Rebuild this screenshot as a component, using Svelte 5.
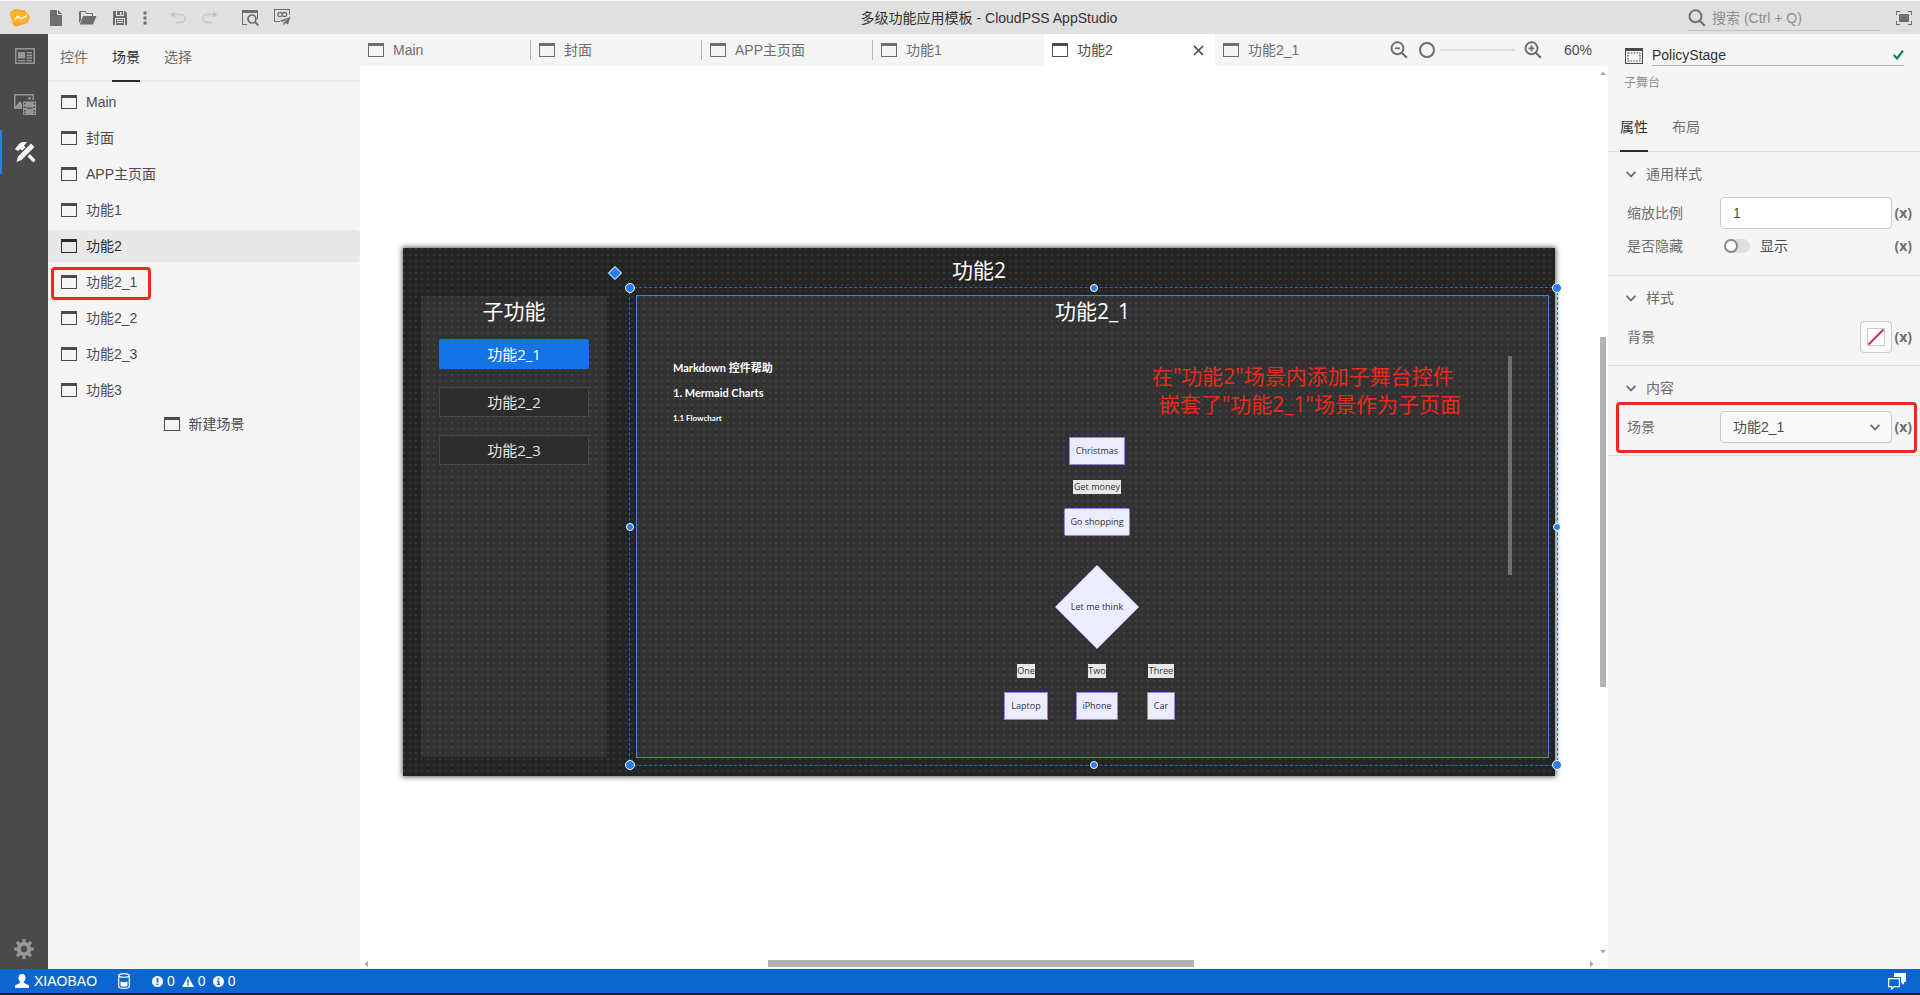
<script>
  const scenes = ['Main', '封面', 'APP主页面', '功能1', '功能2', '功能2_1', '功能2_2', '功能2_3', '功能3'];
  const tabs = ['Main', '封面', 'APP主页面', '功能1', '功能2', '功能2_1'];
  const current = '功能2';
  const marked = '功能2_1';
  const subScenes = ['功能2_1', '功能2_2', '功能2_3'];

  let zoom = $state(0);
  let ratio = $state('1');
  let hidden = $state(false);
  let scene = $state('功能2_1');
  let stageName = $state('PolicyStage');

  const handles = [
    { x: 0, y: 0, corner: true },
    { x: 50, y: 0 },
    { x: 100, y: 0, corner: true },
    { x: 0, y: 50 },
    { x: 100, y: 50 },
    { x: 0, y: 100, corner: true },
    { x: 50, y: 100 },
    { x: 100, y: 100, corner: true }
  ];

  const nodes = [
    { text: 'Christmas', x: 460, y: 155, w: 56, h: 28, kind: 'box' },
    { text: 'Get money', x: 460, y: 191, w: 48, h: 14, kind: 'edge' },
    { text: 'Go shopping', x: 460, y: 226, w: 66, h: 28, kind: 'box round' },
    { text: 'One', x: 389, y: 375, w: 18, h: 14, kind: 'edge' },
    { text: 'Two', x: 460, y: 375, w: 18, h: 14, kind: 'edge' },
    { text: 'Three', x: 524, y: 375, w: 26, h: 14, kind: 'edge' },
    { text: 'Laptop', x: 389, y: 410, w: 44, h: 28, kind: 'box' },
    { text: 'iPhone', x: 460, y: 410, w: 42, h: 28, kind: 'box' },
    { text: 'Car', x: 524, y: 410, w: 28, h: 28, kind: 'box' }
  ];
</script>

{#snippet windowIcon()}
  <svg class="ico" width="16" height="14" viewBox="0 0 16 14" aria-hidden="true">
    <path fill="currentColor" fill-rule="evenodd" d="M0 0h16v14H0zM1 3v10h14V3z" />
  </svg>
{/snippet}

{#snippet chevron()}
  <svg class="ico" width="10" height="7" viewBox="0 0 10 7" aria-hidden="true">
    <path fill="none" stroke="currentColor" stroke-width="1.7" d="M.6.8 5 5.4 9.4.8" />
  </svg>
{/snippet}

{#snippet magnifier(sign)}
  <svg class="ico" width="18" height="18" viewBox="0 0 18 18" aria-hidden="true">
    <circle cx="7.5" cy="7.3" r="6" fill="none" stroke="currentColor" stroke-width="1.9" />
    <path fill="none" stroke="currentColor" stroke-width="2.2" d="m11.8 11.8 5 5" />
    {#if sign}<path fill="none" stroke="currentColor" stroke-width="1.8" d={sign} />{/if}
  </svg>
{/snippet}

<div class="app">
  <header>
    <div class="tools">
      <svg class="logo" width="20" height="18" viewBox="0 0 20 18" aria-hidden="true">
        <path fill="#ff9d1f" d="M4.500 0 15 1.500l1.500 2.500L20 7l-2.500 7L6 17.500 3 16 0 4.500z" />
        <path fill="#ffb42c" d="M0 3 4.500 1l12 2.500 2.500 4-3 6.500-13 .5L2 10z" />
        <path fill="none" stroke="#fff" stroke-width="1.400" d="m4.500 10.500 3.500-3 3.500 2.500 5-3.500" />
      </svg>
      <button aria-label="New">
        <svg width="16" height="16" viewBox="0 0 16 16"><path fill="currentColor" d="M2 0h7v5h5v11H2zM10 0l4 4h-4z" /></svg>
      </button>
      <button aria-label="Open">
        <svg width="18" height="14" viewBox="0 0 18 14"><path fill="currentColor" d="M1 0h5.500L8 2h6v3h-1V3H7.500L6 1H2v8L0 12.500V1zM4 5h13.500L14 13.500H.8z" /></svg>
      </button>
      <button aria-label="Save">
        <svg width="14" height="14" viewBox="0 0 14 14"><path fill="currentColor" fill-rule="evenodd" d="M0 0h3v5h8V0h1l2 2v12h-2V7H2v7H0zM6 0h4v4H8.500V1H7v3H4V0zM3 8h8v6H3zm1 1v1h6V9zm0 2v1h6v-1z" /></svg>
      </button>
      <button class="narrow" aria-label="More">
        <svg width="4" height="14" viewBox="0 0 4 14"><path fill="currentColor" d="M.5.5h3v3h-3zM.5 5.500h3v3h-3zM.5 10.500h3v3h-3z" /></svg>
      </button>
      <button class="off" aria-label="Undo" disabled>
        <svg width="16" height="13" viewBox="0 0 16 13"><path fill="none" stroke="currentColor" stroke-width="1.600" d="M4 3.500h7a4 4 0 0 1 0 8H6" /><path fill="currentColor" d="M0 3.500 5 0v7z" /></svg>
      </button>
      <button class="off" aria-label="Redo" disabled>
        <svg width="16" height="13" viewBox="0 0 16 13"><path fill="none" stroke="currentColor" stroke-width="1.600" d="M12 3.500H5a4 4 0 0 0 0 8h5" /><path fill="currentColor" d="m16 3.500-5-3.500v7z" /></svg>
      </button>
      <button class="spaced" aria-label="Preview">
        <svg width="17" height="16" viewBox="0 0 17 16"><path fill="currentColor" d="M0 0h16v9h-1V3H1v11h4v1H0z" /><circle cx="10" cy="9" r="4" fill="none" stroke="currentColor" stroke-width="1.700" /><path stroke="currentColor" stroke-width="2" d="m12.800 11.800 3.500 3.500" /></svg>
      </button>
      <button aria-label="Publish">
        <svg width="17" height="17" viewBox="0 0 17 17"><path fill="currentColor" d="M0 0h16v6h-1V1H1v11h5v1H0zM16.500 8 14 15.500l-2.500-1.500-2 2.500V13.500L14.500 9.500 8 13 6 11.500z" /><circle cx="6" cy="5.500" r="2.200" fill="none" stroke="currentColor" stroke-width="1.200" /><circle cx="10.500" cy="5.500" r="2.200" fill="none" stroke="currentColor" stroke-width="1.200" /></svg>
      </button>
    </div>
    <div class="title">多级功能应用模板 - CloudPSS AppStudio</div>
    <div class="right-tools">
      <label class="search">
        {@render magnifier('')}
        <input type="search" placeholder="搜索 (Ctrl + Q)" aria-label="搜索" />
      </label>
      <button aria-label="Full screen">
        <svg width="16" height="14" viewBox="0 0 16 14"><path fill="currentColor" d="M3 3h10v8H3zM0 0h4v1H1v3H0zM12 0h4v4h-1V1h-3zM0 10h1v3h3v1H0zM15 10h1v4h-4v-1h3z" /></svg>
      </button>
    </div>
  </header>

  <main>
    <nav class="rail">
      <button aria-label="Pages">
        <svg width="20" height="16" viewBox="0 0 20 16"><path fill="currentColor" fill-rule="evenodd" d="M0 0h20v16H0zM1.500 1.500v13h17v-13zM3 4h7v6.500H3zM11.500 4H17v1.500h-5.500zM11.500 6.700H17v1.500h-5.500zM11.500 9.300H17v1.500h-5.500zM3 12h7v1.200H3zM11.500 12H17v1.200h-5.500z" /></svg>
      </button>
      <button aria-label="Assets">
        <svg width="22" height="24" viewBox="0 -2 22 24"><path fill="currentColor" fill-rule="evenodd" d="M0 0h20v6h-1.500V1.500h-17v11L6 7l2 2.500V15H0z" /><circle cx="15.500" cy="4.200" r="1.500" fill="currentColor" /><path fill="currentColor" fill-rule="evenodd" d="M9 7.500h13V21H9zM10 9v1.500h1.500V9zm0 3.500V14h1.500v-1.500zm0 3.500v1.500h1.500V16zM19.500 9v1.500H21V9zm0 3.500V14H21v-1.500zm0 3.500v1.500H21V16zM12.500 13.500v1.200h6v-1.200zM10 19v1h1.500v-1zm9.500 0v1H21v-1z" /></svg>
      </button>
      <button class="on" aria-label="Design">
        <svg width="21" height="22" viewBox="0 -1 21 22"><path fill="currentColor" d="M1 8 0 7l4-5c2-2 5-2.500 8-1.500L9 3.500l1.500 2-3.500 3L5 7 3.500 9zM16 1.500l3.500 3.500L6.500 18l-5 2 1.500-5.500zM12.500 14.500l2.500-2.500 5.500 6-2 2.500z" /></svg>
      </button>
      <span class="grow"></span>
      <button class="gear" aria-label="Settings">
        <svg width="20" height="20" viewBox="-10 -10 20 20">
          <circle r="5.200" fill="none" stroke="currentColor" stroke-width="4" />
          {#each [0, 45, 90, 135] as a}
            <path fill="currentColor" transform="rotate({a})" d="M-1.600-10h3.200v3.500h-3.200zM-1.600 6.500h3.200V10h-3.200z" />
          {/each}
        </svg>
      </button>
    </nav>

    <aside class="scenes">
      <div class="subtabs">
        <button>控件</button>
        <button class="on">场景</button>
        <button>选择</button>
      </div>
      <ul>
        {#each scenes as name}
          <li>
            <button class:on={name === current} class:marked={name === marked}>
              {@render windowIcon()}<span>{name}</span>
            </button>
          </li>
        {/each}
      </ul>
      <button class="new">{@render windowIcon()}<span>新建场景</span></button>
    </aside>

    <section class="editor">
      <div class="tabbar">
        <div class="tabs">
          {#each tabs as name}
            <div class="tab" class:on={name === current}>
              <button class="name">{@render windowIcon()}<span>{name}</span></button>
              {#if name === current}
                <button class="close" aria-label="Close">
                  <svg width="11" height="11" viewBox="0 0 11 11"><path stroke="currentColor" stroke-width="1.700" d="m1 1 9 9M10 1l-9 9" /></svg>
                </button>
              {/if}
            </div>
          {/each}
        </div>
        <div class="zoom">
          <button aria-label="Zoom out">{@render magnifier('M5 7.300h5')}</button>
          <input type="range" min="0" max="100" bind:value={zoom} aria-label="Zoom" />
          <button aria-label="Zoom in">{@render magnifier('M4.500 7.300h6M7.500 4.300v6')}</button>
          <span>60%</span>
        </div>
      </div>

      <div class="viewport">
        <div class="canvas">
          <div class="stage">
            <h1>功能2</h1>
            <div class="menu">
              <h2>子功能</h2>
              {#each subScenes as name, i}
                <button class:on={i === 0}>{name}</button>
              {/each}
            </div>
            <div class="sub">
              <h2>功能2_1</h2>
              <div class="markdown">
                <h3>Markdown 控件帮助</h3>
                <h3>1. Mermaid Charts</h3>
                <h4>1.1 Flowchart</h4>
              </div>
              <p class="note">在"功能2"场景内添加子舞台控件<br /><span>嵌套了"功能2_1"场景作为子页面</span></p>
              <span class="thumb"></span>
              {#each nodes as n}
                <div class="node {n.kind}" style="left:{n.x}px;top:{n.y}px;width:{n.w}px;height:{n.h}px">{n.text}</div>
              {/each}
              <svg class="rhombus" width="86" height="86" viewBox="0 0 86 86" aria-hidden="true">
                <path fill="#ececff" stroke="#9370db" stroke-width="1" d="M43 1 85 43 43 85 1 43z" />
              </svg>
              <div class="node think">Let me think</div>
            </div>
            <div class="dots"></div>
            <div class="selection">
              <span class="pivot"></span>
              {#each handles as h}
                <span class="handle" class:corner={h.corner} style="left:{h.x}%;top:{h.y}%"></span>
              {/each}
            </div>
          </div>
        </div>
        <div class="vbar">
          <svg width="6" height="4" viewBox="0 0 6 4" aria-hidden="true"><path fill="#a8a8a8" d="M0 4h6L3 .5z" /></svg>
          <span class="track"><span class="vthumb"></span></span>
          <svg width="6" height="4" viewBox="0 0 6 4" aria-hidden="true"><path fill="#a8a8a8" d="M0 0h6L3 3.500z" /></svg>
        </div>
        <div class="hbar">
          <svg width="4" height="6" viewBox="0 0 4 6" aria-hidden="true"><path fill="#a8a8a8" d="M4 0v6L.5 3z" /></svg>
          <span class="track"><span class="hthumb"></span></span>
          <svg width="4" height="6" viewBox="0 0 4 6" aria-hidden="true"><path fill="#a8a8a8" d="M0 0v6l3.500-3z" /></svg>
        </div>
      </div>
    </section>

    <aside class="props">
      <div class="head">
        <svg class="ico" width="18" height="16" viewBox="0 0 18 16" aria-hidden="true">
          <path fill="#4a4a4a" fill-rule="evenodd" d="M0 0h18v16H0zM1 3v12h16V3z" />
          <rect x="3" y="5" width="12" height="8" fill="none" stroke="#4a4a4a" stroke-width="1.200" stroke-dasharray="1.500 1.300" />
        </svg>
        <label class="field">
          <input bind:value={stageName} aria-label="Name" />
          <svg width="11" height="10" viewBox="0 0 11 10" aria-hidden="true"><path fill="none" stroke="#12805c" stroke-width="2.200" d="M.8 5 4 8.500 10 .8" /></svg>
        </label>
      </div>
      <div class="kind">子舞台</div>
      <div class="subtabs">
        <button class="on">属性</button>
        <button>布局</button>
      </div>

      <section>
        <h5>{@render chevron()}通用样式</h5>
        <div class="row">
          <label for="ratio">缩放比例</label>
          <input id="ratio" class="box-input" bind:value={ratio} />
          <button class="fx">(x)</button>
        </div>
        <div class="row low">
          <label for="hide">是否隐藏</label>
          <div class="switch">
            <input id="hide" type="checkbox" bind:checked={hidden} />
            <span>显示</span>
          </div>
          <button class="fx">(x)</button>
        </div>
      </section>

      <section>
        <h5>{@render chevron()}样式</h5>
        <div class="row">
          <span class="label">背景</span>
          <div class="end">
            <button class="swatch" aria-label="背景">
              <svg width="18" height="18" viewBox="0 0 18 18"><rect x=".5" y=".5" width="17" height="17" fill="#fff" stroke="#cacaca" /><path stroke="#c2343f" stroke-width="2" d="M1.500 16.500 16.500 1.500" /></svg>
            </button>
          </div>
          <button class="fx">(x)</button>
        </div>
      </section>

      <section>
        <h5>{@render chevron()}内容</h5>
        <div class="row marked-row">
          <label for="scene">场景</label>
          <div class="select">
            <select id="scene" bind:value={scene}>
              {#each scenes as name}<option value={name}>{name}</option>{/each}
            </select>
            {@render chevron()}
          </div>
          <button class="fx">(x)</button>
        </div>
      </section>
    </aside>
  </main>

  <footer>
    <svg width="14" height="14" viewBox="0 0 14 14" aria-hidden="true"><path fill="currentColor" d="M7 0c2.200 0 3.500 1.500 3.500 3.800 0 1.700-.7 3.200-1.700 4v1L14 11.500V14H0v-2.500l5.200-2.700v-1c-1-.8-1.700-2.300-1.700-4C3.500 1.500 4.800 0 7 0z" /></svg>
    <span class="user">XIAOBAO</span>
    <svg class="db" width="12" height="16" viewBox="0 0 12 16" aria-hidden="true"><path fill="none" stroke="currentColor" stroke-width="1.200" d="M.7 2.500v11C.7 16 11.300 16 11.300 13.500v-11C11.300 0 .7 0 .7 2.500zc0 2.300 10.600 2.300 10.600 0" /><path fill="currentColor" d="M2.500 8.500c2 1 5 1 7 0V13c-2 1-5 1-7 0z" /></svg>
    <span class="stat">
      <svg width="11" height="11" viewBox="0 0 11 11" aria-hidden="true"><circle cx="5.500" cy="5.500" r="5.500" fill="currentColor" /><path fill="#0d66d0" d="M4.600 2h1.800v4.500H4.600zM4.600 7.500h1.800v1.700H4.600z" /></svg>0
    </span>
    <span class="stat">
      <svg width="12" height="11" viewBox="0 0 12 11" aria-hidden="true"><path fill="currentColor" d="M6 0l6 11H0z" /><path fill="#0d66d0" d="M5.200 3.500h1.600V7.500H5.200zM5.200 8.300h1.600v1.500H5.200z" /></svg>0
    </span>
    <span class="stat">
      <svg width="11" height="11" viewBox="0 0 11 11" aria-hidden="true"><circle cx="5.500" cy="5.500" r="5.500" fill="currentColor" /><path fill="#0d66d0" d="M4.600 1.800h1.800v1.600H4.600zM4 4.500h2.400V8H7v1H4V8h.7V5.500H4z" /></svg>0
    </span>
    <span class="grow"></span>
    <svg width="18" height="17" viewBox="0 0 18 17" aria-hidden="true"><path fill="currentColor" d="M6 0h12v9h-1.500l-1.500 3-2-3V4H6z" /><path fill="none" stroke="currentColor" stroke-width="1.200" d="M.6 5.600h10.800v8H6L3.500 16v-2.400H.6z" /></svg>
  </footer>
</div>

<style>
  :global(body) {
    margin: 0;
  }
  .app {
    display: flex;
    flex-direction: column;
    min-height: 100vh;
    box-sizing: border-box;
    border-bottom: 2px solid #16202f;
    background: #f5f5f5;
    color: #4b4b4b;
    font: 14px/20px 'Liberation Sans', 'Noto Sans CJK SC', sans-serif;
  }
  button {
    display: flex;
    align-items: center;
    margin: 0;
    padding: 0;
    border: 0;
    background: none;
    color: inherit;
    font: inherit;
  }
  input,
  select {
    margin: 0;
    padding: 0;
    border: 0;
    background: none;
    color: inherit;
    font: inherit;
    outline: none;
    box-sizing: border-box;
    min-width: 0;
  }
  svg {
    display: block;
    flex: none;
  }
  .grow {
    flex: 1;
  }

  header {
    display: flex;
    align-items: center;
    height: 33px;
    border-top: 1px solid #f5f5f5;
    background: #e0e0e0;
    color: #6e6e6e;
  }
  .tools {
    display: flex;
    align-items: center;
    box-sizing: border-box;
    width: 298px;
    padding-left: 10px;
  }
  .logo {
    margin-right: 10px;
  }
  .tools button {
    justify-content: center;
    width: 32px;
    height: 32px;
  }
  .tools .narrow {
    width: 18px;
  }
  .tools .off {
    color: #c6c6c6;
  }
  .tools .narrow + .off {
    margin-left: 9px;
  }
  .tools .spaced {
    margin-left: 8px;
  }
  .title {
    flex: 1;
    text-align: center;
    color: #323232;
  }
  .right-tools {
    display: flex;
    align-items: center;
    gap: 16px;
    padding: 0 8px;
  }
  .search {
    display: flex;
    align-items: center;
    gap: 6px;
    width: 192px;
    height: 24px;
    margin-top: 2px;
    border-bottom: 1px solid #c4c4c4;
  }
  .search input {
    flex: 1;
    -webkit-appearance: none;
    appearance: none;
  }
  .search input::placeholder {
    color: #8e8e8e;
  }

  main {
    flex: 1;
    display: flex;
    min-height: 0;
  }
  .rail {
    display: flex;
    flex-direction: column;
    gap: 4px;
    width: 48px;
    background: #4a4a4a;
    color: #969696;
  }
  .rail button {
    justify-content: center;
    height: 44px;
    border-left: 2px solid transparent;
  }
  .rail .on {
    border-left-color: #2680eb;
    color: #f5f5f5;
  }
  .rail button.gear {
    height: 40px;
    border-left: 0;
  }

  .scenes {
    width: 312px;
  }
  .subtabs {
    display: flex;
    gap: 24px;
    height: 46px;
    padding: 0 12px;
    border-bottom: 2px solid #eaeaea;
    color: #6e6e6e;
  }
  .subtabs button {
    height: 48px;
    box-sizing: border-box;
    border-bottom: 2px solid transparent;
  }
  .subtabs .on {
    border-color: #2c2c2c;
    color: #2c2c2c;
  }
  ul {
    display: flex;
    flex-direction: column;
    gap: 4px;
    margin: 4px 0 0;
    padding: 0;
    list-style: none;
  }
  li button {
    position: relative;
    gap: 9px;
    width: 100%;
    height: 32px;
    padding-left: 13px;
    border-radius: 0 4px 4px 0;
  }
  li .on {
    background: #e8e8e8;
    color: #2c2c2c;
  }
  .marked::after {
    content: '';
    position: absolute;
    left: 3px;
    top: 1px;
    width: 94px;
    height: 27px;
    border: 3px solid #f0281e;
    border-radius: 4px;
  }
  .new {
    gap: 9px;
    height: 32px;
    margin: 2px auto 0;
  }

  .editor {
    flex: 1;
    display: flex;
    flex-direction: column;
    min-width: 0;
  }
  .tabbar {
    display: flex;
    height: 32px;
    color: #6e6e6e;
  }
  .tabs {
    display: flex;
    flex: 1;
  }
  .tab {
    position: relative;
    display: flex;
    align-items: center;
    box-sizing: border-box;
    width: 171px;
    padding: 0 11px 0 8px;
  }
  .tab:nth-child(-n + 3)::after {
    content: '';
    position: absolute;
    right: 0;
    top: 6px;
    bottom: 6px;
    width: 1px;
    background: #b8b8b8;
  }
  .tab.on {
    background: #fff;
    color: #4b4b4b;
  }
  .tab .name {
    flex: 1;
    gap: 9px;
    height: 32px;
  }
  .close {
    height: 32px;
  }
  .zoom {
    display: flex;
    align-items: center;
    padding-right: 16px;
  }
  .zoom input {
    width: 99px;
    height: 18px;
    margin: 0 6px 0 11px;
    -webkit-appearance: none;
    appearance: none;
    background: linear-gradient(#dcdcdc, #dcdcdc) 21px 8px / 75px 2px no-repeat;
  }
  .zoom input::-webkit-slider-thumb {
    -webkit-appearance: none;
    width: 16px;
    height: 16px;
    box-sizing: border-box;
    border: 2px solid #6e6e6e;
    border-radius: 50%;
    background: #f5f5f5;
  }
  .zoom span {
    margin-left: 22px;
    color: #4b4b4b;
  }

  .viewport {
    flex: 1;
    display: grid;
    grid-template: 1fr 11px / 1fr 10px;
    background: #fff;
  }
  .canvas {
    display: flex;
    align-items: center;
    justify-content: center;
  }
  .vbar {
    display: flex;
    flex-direction: column;
    align-items: center;
    padding: 5px 0 4px;
  }
  .vbar .track {
    flex: 1;
    display: flex;
    flex-direction: column;
    width: 6px;
  }
  .vthumb {
    height: 40%;
    margin-top: 262px;
    background: #b2b2b2;
  }
  .hbar {
    display: flex;
    align-items: center;
    padding: 0 4px;
  }
  .hbar .track {
    flex: 1;
    display: flex;
  }
  .hthumb {
    width: 426px;
    height: 7px;
    margin-left: 400px;
    background: #b2b2b2;
  }

  .stage {
    position: relative;
    width: 1152px;
    height: 528px;
    background: #242424;
    color: #fff;
    box-shadow: 0 0 5px 1px rgba(0, 0, 0, 0.6);
    font-family: 'Open Sans', 'Noto Sans CJK SC', sans-serif;
  }
  .dots {
    position: absolute;
    inset: 0;
    background: radial-gradient(circle at 1px 1px, rgba(255, 255, 255, 0.08) 0, rgba(255, 255, 255, 0.08) 1px, transparent 1px) 0 0 / 6px 6px;
    pointer-events: none;
  }
  h1,
  h2 {
    margin: 0;
    text-align: center;
    font-size: 21px;
    line-height: 28px;
    font-weight: 400;
  }
  h1 {
    padding-top: 8px;
  }
  .menu {
    position: absolute;
    left: 18px;
    top: 48px;
    width: 186px;
    height: 461px;
    background: #323232;
  }
  .menu h2 {
    padding: 1px 0 14px;
  }
  .menu button {
    position: relative;
    z-index: 1;
    justify-content: center;
    width: 150px;
    height: 30px;
    margin: 0 auto 18px;
    box-sizing: border-box;
    border: 1px solid #484848;
    border-radius: 2px;
    background: #2c2c2c;
    color: #e4e4e4;
    font-size: 15px;
  }
  .menu .on {
    border-color: #1473e6;
    background: #1473e6;
    color: #fff;
  }
  .sub {
    position: absolute;
    left: 233px;
    top: 47px;
    width: 911px;
    height: 461px;
    border: 1px solid #4a82c0;
    background: #323232;
  }
  .sub > h2 {
    padding-top: 1px;
  }
  .markdown {
    display: flex;
    flex-direction: column;
    gap: 9px;
    padding: 35px 36px;
    line-height: 16px;
    font-family: Lato, 'Noto Sans CJK SC', sans-serif;
  }
  h3,
  h4 {
    margin: 0;
    font-size: 11px;
    font-weight: 700;
  }
  h4 {
    font-size: 8px;
  }
  .note {
    position: absolute;
    left: 515px;
    top: 66px;
    margin: 0;
    color: #e8281b;
    font-size: 21px;
    line-height: 28px;
    white-space: nowrap;
  }
  .note span {
    padding-left: 7px;
  }
  .thumb {
    position: absolute;
    left: 871px;
    top: 60px;
    width: 4px;
    height: 219px;
    background: #6f6f6f;
  }
  .node {
    position: absolute;
    z-index: 1;
    display: flex;
    align-items: center;
    justify-content: center;
    box-sizing: border-box;
    transform: translate(-50%, -50%);
    color: #333;
    font-size: 9px;
    line-height: 12px;
    white-space: nowrap;
  }
  .box {
    border: 1px solid #9a80dc;
    background: #ececff;
  }
  .round {
    border-radius: 2px;
  }
  .edge {
    background: #e8e8e8;
  }
  .rhombus {
    position: absolute;
    z-index: 1;
    left: 417px;
    top: 268px;
  }
  .think {
    left: 460px;
    top: 311px;
  }
  .selection {
    position: absolute;
    z-index: 2;
    left: 226px;
    top: 39px;
    width: 929px;
    height: 479px;
    box-sizing: border-box;
    border: 1px dashed #1e6ab4;
  }
  .handle {
    position: absolute;
    width: 6px;
    height: 6px;
    border: 1px solid #fff;
    border-radius: 50%;
    background: #2680eb;
    transform: translate(-50%, -50%);
  }
  .corner {
    width: 8px;
    height: 8px;
  }
  .pivot {
    position: absolute;
    left: -20px;
    top: -20px;
    width: 8px;
    height: 8px;
    border: 1px solid #cfe3fb;
    background: #2680eb;
    transform: rotate(45deg);
  }

  .props {
    width: 312px;
    color: #6e6e6e;
  }
  .head {
    display: flex;
    align-items: center;
    gap: 9px;
    padding: 11px 16px 0 17px;
  }
  .field {
    display: flex;
    flex: 1;
    align-items: center;
    height: 20px;
    border-bottom: 1px solid #b8b8b8;
  }
  .field input {
    flex: 1;
    color: #323232;
  }
  .kind {
    padding: 7px 16px 0;
    color: #8e8e8e;
    font-size: 12px;
  }
  .props .subtabs {
    height: 48px;
    margin-top: 10px;
    border-bottom-width: 1px;
    border-color: #e4e4e4;
  }
  .props .subtabs button {
    height: 49px;
  }
  .props section {
    padding: 12px 8px 12px 18px;
    border-bottom: 1px solid #dedede;
  }
  h5 {
    display: flex;
    align-items: center;
    gap: 10px;
    margin: 0 0 13px;
    font-size: 14px;
    font-weight: 400;
  }
  .row {
    position: relative;
    display: grid;
    grid-template-columns: 94px 1fr 20px;
    align-items: center;
    height: 32px;
  }
  .row label,
  .label {
    padding-left: 1px;
  }
  .low {
    height: 34px;
  }
  .fx {
    justify-content: flex-end;
    font-family: 'Open Sans', sans-serif;
    font-weight: 700;
  }
  .box-input,
  select {
    width: 100%;
    height: 32px;
    padding: 0 12px;
    border: 1px solid #cacaca;
    border-radius: 4px;
    background: #fff;
    color: #4b4b4b;
  }
  .switch {
    display: flex;
    align-items: center;
    gap: 10px;
    padding-left: 4px;
    color: #4b4b4b;
  }
  .switch input {
    -webkit-appearance: none;
    appearance: none;
    width: 26px;
    height: 14px;
    border-radius: 7px;
    background: #dedede;
  }
  .switch input::before {
    content: '';
    display: block;
    box-sizing: border-box;
    width: 14px;
    height: 14px;
    border: 2px solid #8a8a8a;
    border-radius: 50%;
    background: #fff;
  }
  .switch input:checked::before {
    margin-left: 12px;
  }
  .end {
    display: flex;
    justify-content: flex-end;
  }
  .swatch {
    justify-content: center;
    width: 32px;
    height: 32px;
    border: 1px solid #cacaca;
    border-radius: 4px;
    background: #fafafa;
  }
  .select {
    position: relative;
  }
  .select select {
    display: block;
    -webkit-appearance: none;
    appearance: none;
    background: #fafafa;
  }
  .select :global(svg) {
    position: absolute;
    right: 12px;
    top: 13px;
    pointer-events: none;
  }
  .marked-row::after {
    content: '';
    position: absolute;
    inset: -9px -5px -10px -10px;
    border: 3px solid #f0281e;
    border-radius: 4px;
    pointer-events: none;
  }

  footer {
    display: flex;
    align-items: center;
    box-sizing: border-box;
    height: 24px;
    padding: 0 14px 0 15px;
    background: #0d66d0;
    color: #fff;
  }
  .user {
    margin: 0 21px 0 5px;
  }
  .db {
    margin-right: 22px;
  }
  .stat {
    display: flex;
    align-items: center;
    gap: 4px;
    margin-right: 7px;
  }
</style>
